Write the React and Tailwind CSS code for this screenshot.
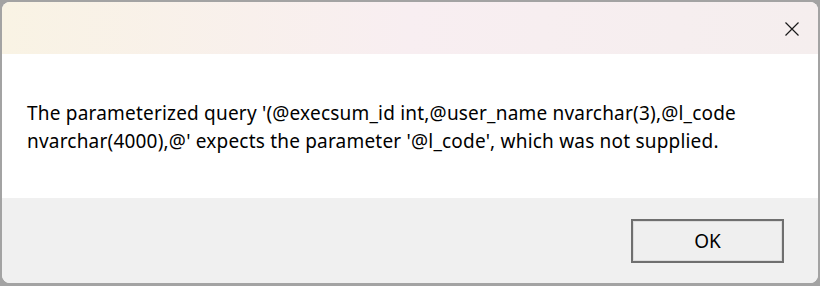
export default function App() {
  return (
    <div className="w-[820px] h-[286px] bg-[#a3a3a3] p-[2px] pb-[3px] font-['Noto_Sans',sans-serif]">
      <div className="flex h-full flex-col overflow-hidden rounded-lg bg-white">
        {/* title bar */}
        <div className="flex h-[52px] shrink-0 items-center justify-end bg-gradient-to-r from-[#f9f3e4] via-[#f8eef1] to-[#f5eeee] pr-[18px]">
          <svg width="16" height="16" viewBox="0 0 16 16" className="mt-[2px]">
            <path d="M1.5 1.5 L14.5 14.5 M14.5 1.5 L1.5 14.5" stroke="#1a1a1a" strokeWidth="1.2" fill="none" />
          </svg>
        </div>
        {/* message */}
        <div className="h-[144px] shrink-0 bg-white pl-[25px] pt-[45px] text-[19px] leading-[28px] text-[#000] tracking-[0.2px]">
          <p>The parameterized query '(@execsum_id int,@user_name nvarchar(3),@l_code</p>
          <p>nvarchar(4000),@' expects the parameter '@l_code', which was not supplied.</p>
        </div>
        {/* footer */}
        <div className="flex flex-1 items-start justify-end bg-[#f0f0f0] pr-[34px] pt-[21px]">
          <button className="flex h-[44px] w-[153px] items-center justify-center border-2 border-[#6f6f6f] bg-[#efefef] text-[19px] text-black shadow-[inset_0_0_0_1px_#dcdcdc]">
            OK
          </button>
        </div>
      </div>
    </div>
  );
}
